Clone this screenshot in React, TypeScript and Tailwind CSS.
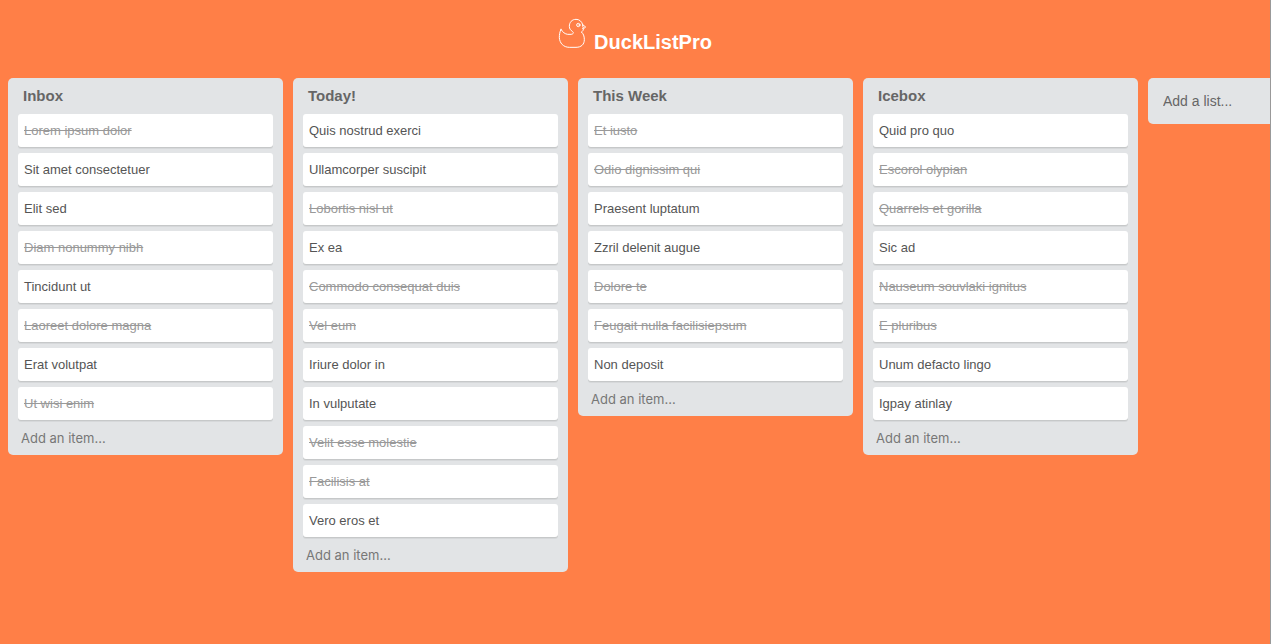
import { useState } from "react";

type Item = { text: string; done: boolean };
type List = { title: string; items: Item[] };

const open = (text: string): Item => ({ text, done: false });
const done = (text: string): Item => ({ text, done: true });

const initialLists: List[] = [
  {
    title: "Inbox",
    items: [
      done("Lorem ipsum dolor"),
      open("Sit amet consectetuer"),
      open("Elit sed"),
      done("Diam nonummy nibh"),
      open("Tincidunt ut"),
      done("Laoreet dolore magna"),
      open("Erat volutpat"),
      done("Ut wisi enim"),
    ],
  },
  {
    title: "Today!",
    items: [
      open("Quis nostrud exerci"),
      open("Ullamcorper suscipit"),
      done("Lobortis nisl ut"),
      open("Ex ea"),
      done("Commodo consequat duis"),
      done("Vel eum"),
      open("Iriure dolor in"),
      open("In vulputate"),
      done("Velit esse molestie"),
      done("Facilisis at"),
      open("Vero eros et"),
    ],
  },
  {
    title: "This Week",
    items: [
      done("Et iusto"),
      done("Odio dignissim qui"),
      open("Praesent luptatum"),
      open("Zzril delenit augue"),
      done("Dolore te"),
      done("Feugait nulla facilisiepsum"),
      open("Non deposit"),
    ],
  },
  {
    title: "Icebox",
    items: [
      open("Quid pro quo"),
      done("Escorol olypian"),
      done("Quarrels et gorilla"),
      open("Sic ad"),
      done("Nauseum souvlaki ignitus"),
      done("E pluribus"),
      open("Unum defacto lingo"),
      open("Igpay atinlay"),
    ],
  },
];

function Duck() {
  return (
    <svg
      aria-hidden="true"
      className="h-8 w-7"
      viewBox="-4 0 84 96"
      fill="none"
      stroke="white"
      strokeWidth="3"
      strokeLinejoin="round"
      strokeLinecap="round"
    >
      <path d="M5 34C1 42 0 50 0 59C1 75 12 88 30 88H50C66 88 75 79 75 65C75 54 72 47 66 42C70 40 72 37 72 33L79 27L70 20C67 10 60 4 50 4C38 4 30 13 30 25C30 32 34 37 39 40C44 44 43 48 35 49H25C17 48 10 43 5 34Z" />
      <path d="M70 20V25L73 28L69 31H72" />
      <circle cx="57" cy="21" r="5" />
      <path d="M58 21H59" />
    </svg>
  );
}

function ListColumn({ list, onToggle }: { list: List; onToggle: (index: number) => void }) {
  return (
    <section className="w-[275px] shrink-0 rounded-[5px] bg-[#e2e4e6] px-2.5">
      <h2 className="px-[5px] pt-2 pb-2 text-[15px] leading-5 font-bold text-[#666]">{list.title}</h2>
      <ul className="flex flex-col gap-1.5">
        {list.items.map((item, index) => (
          <li key={item.text}>
            <button
              type="button"
              aria-pressed={item.done}
              onClick={() => onToggle(index)}
              className={
                item.done
                  ? "block h-[33px] w-full rounded-[3px] bg-white px-1.5 text-left text-[13px] text-[#999] line-through shadow-[0_1px_0_#c6c8c9,0_2px_0_#d6d8da]"
                  : "block h-[33px] w-full rounded-[3px] bg-white px-1.5 text-left text-[13px] text-[#555] shadow-[0_1px_0_#c6c8c9,0_2px_0_#d6d8da]"
              }
            >
              {item.text}
            </button>
          </li>
        ))}
      </ul>
      <input
        type="text"
        aria-label={`Add an item to ${list.title}`}
        placeholder="Add an item..."
        className="block h-[35px] w-full bg-transparent px-[3px] font-[Inter,sans-serif] text-[13px] text-[#555] outline-none placeholder:text-[#777]"
      />
    </section>
  );
}

export default function App() {
  const [lists, setLists] = useState(initialLists);

  const toggle = (listIndex: number, itemIndex: number) =>
    setLists((current) =>
      current.map((list, i) =>
        i === listIndex
          ? {
              ...list,
              items: list.items.map((item, j) => (j === itemIndex ? { ...item, done: !item.done } : item)),
            }
          : list,
      ),
    );

  return (
    <div className="flex min-h-screen flex-col overflow-x-hidden border-r border-[#999] bg-[#ff7f47] font-['Liberation_Sans',Arial,sans-serif]">
      <header className="flex h-[78px] items-start justify-center gap-2 pt-[18px]">
        <Duck />
        <h1 className="pt-3 text-[20px] leading-6 font-bold text-white">DuckListPro</h1>
      </header>
      <main className="flex items-start gap-2.5 pl-2">
        {lists.map((list, index) => (
          <ListColumn key={list.title} list={list} onToggle={(item) => toggle(index, item)} />
        ))}
        <section className="w-[275px] shrink-0 rounded-[5px] bg-[#e2e4e6]">
          <input
            type="text"
            aria-label="Add a list"
            placeholder="Add a list..."
            className="block h-[46px] w-full bg-transparent px-[15px] text-[14px] text-[#555] outline-none placeholder:text-[#666]"
          />
        </section>
      </main>
    </div>
  );
}
